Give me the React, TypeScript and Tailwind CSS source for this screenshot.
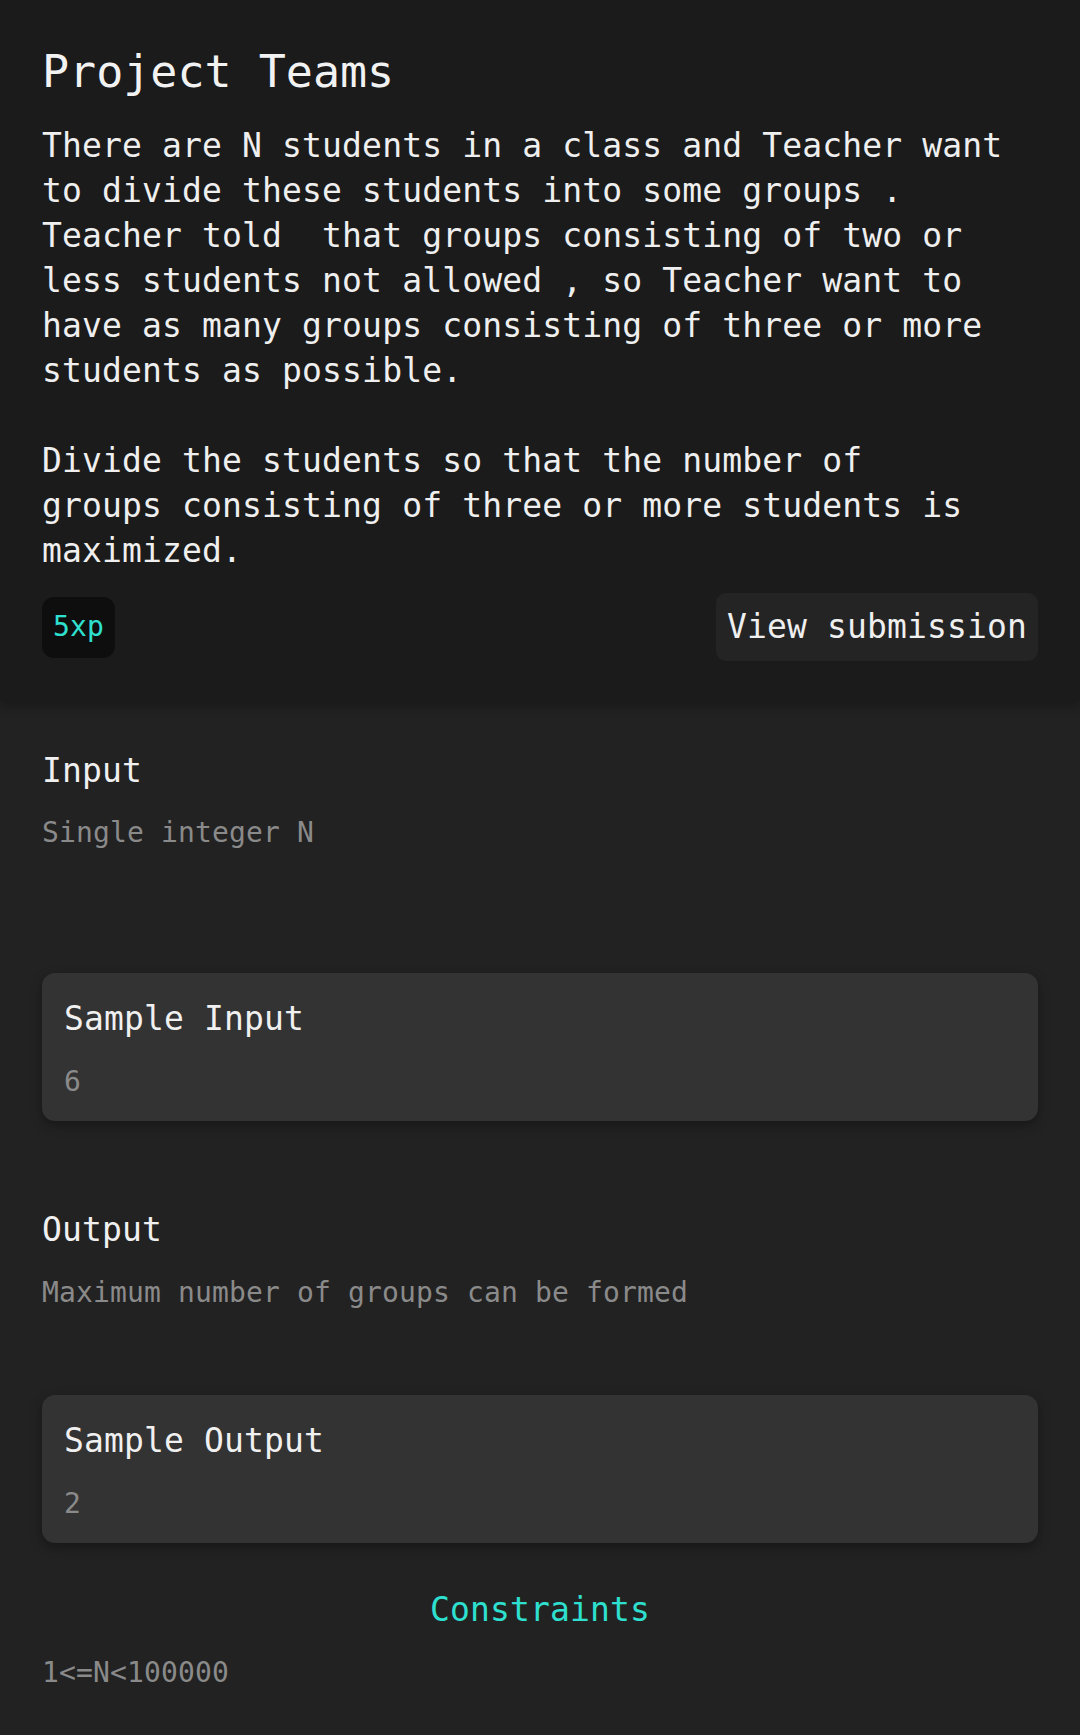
import React from "react";

const mono = { fontFamily: '"DejaVu Sans Mono", "Liberation Mono", monospace' };

export default function App() {
  const para =
    "There are N students in a class and Teacher want\nto divide these students into some groups .\nTeacher told  that groups consisting of two or\nless students not allowed , so Teacher want to\nhave as many groups consisting of three or more\nstudents as possible.\n\nDivide the students so that the number of\ngroups consisting of three or more students is\nmaximized.";
  return (
    <div className="w-[1080px] min-h-[1735px] bg-[#222222] text-[#eeeeee] tracking-[0.14px]" style={mono}>
      <div className="relative z-10 bg-[#1b1b1b] px-[42px] pt-[45px] pb-[41px] shadow-[0_4px_12px_rgba(0,0,0,0.3)]">
        <h1 className="text-[45px] leading-[54px] tracking-normal text-[#f2f2f2]">Project Teams</h1>
        <p className="mt-[24px] whitespace-pre-wrap text-[33px] leading-[45px] text-[#efefef]">{para}</p>
        <div className="mt-[20px] flex items-center justify-between">
          <div className="flex h-[61px] w-[73px] items-center justify-center rounded-[12px] bg-[#0e0e0e] text-[28px] text-[#2ee0d0]">
            5xp
          </div>
          <button className="flex h-[68px] w-[322px] items-center justify-center rounded-[10px] bg-[#242424] text-[33px] text-[#efefef]">
            View submission
          </button>
        </div>
      </div>

      <div className="px-[42px] pt-[46px] pb-[42px]">
        <h2 className="text-[33px] leading-[45px] text-[#f0f0f0]">Input</h2>
        <p className="mt-[20px] text-[28px] leading-[40px] text-[#8a8a8a]">Single integer N</p>

        <div className="mt-[120px] rounded-[13px] bg-[#333333] px-[22px] pt-[23px] pb-[19px] shadow-[0_4px_12px_rgba(0,0,0,0.35)]">
          <h3 className="text-[33px] leading-[45px] text-[#f0f0f0]">Sample Input</h3>
          <p className="mt-[21px] text-[28px] leading-[40px] text-[#8a8a8a]">6</p>
        </div>

        <h2 className="mt-[86px] text-[33px] leading-[45px] text-[#f0f0f0]">Output</h2>
        <p className="mt-[21px] text-[28px] leading-[40px] text-[#8a8a8a]">
          Maximum number of groups can be formed
        </p>

        <div className="mt-[82px] rounded-[13px] bg-[#333333] px-[22px] pt-[23px] pb-[19px] shadow-[0_4px_12px_rgba(0,0,0,0.35)]">
          <h3 className="text-[33px] leading-[45px] text-[#f0f0f0]">Sample Output</h3>
          <p className="mt-[21px] text-[28px] leading-[40px] text-[#8a8a8a]">2</p>
        </div>

        <h2 className="mt-[44px] text-center text-[33px] leading-[45px] text-[#2ee0d0]">Constraints</h2>
        <p className="mt-[21px] text-[28px] leading-[40px] text-[#8a8a8a]">1&lt;=N&lt;100000</p>
      </div>
    </div>
  );
}
